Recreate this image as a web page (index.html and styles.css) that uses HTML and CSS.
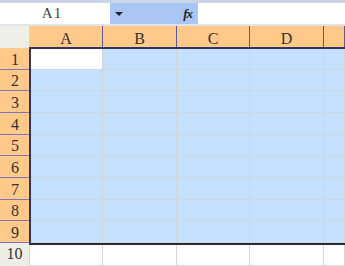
FILE: index.html
```html
<!DOCTYPE html>
<html lang="en">
<head>
  <meta charset="UTF-8">
  <meta name="viewport" content="width=device-width, initial-scale=1.0">
  <title>Sheet</title>
  <link rel="stylesheet" href="styles.css">
</head>
<body>
  <!-- Name box and formula bar -->
  <div class="formula-bar">
    <div class="name-box">A1</div>
    <div class="name-tools">
      <span class="drop"></span>
      <span class="fx">fx</span>
    </div>
    <div class="formula-input"></div>
  </div>

  <!-- Grid -->
  <div class="sheet" id="sheet">
    <div class="selection"></div>
  </div>

  <script>
    const cols = ['A', 'B', 'C', 'D', ''];
    const sheet = document.getElementById('sheet');

    function addCell(cls, text) {
      const cell = document.createElement('div');
      cell.className = cls;
      cell.textContent = text || '';
      sheet.appendChild(cell);
    }

    addCell('corner');
    cols.forEach(c => addCell('col-head', c));

    for (let r = 1; r <= 10; r++) {
      const inSel = r <= 9;
      addCell(inSel ? 'row-head' : 'row-head plain', r);
      for (let c = 0; c < cols.length; c++) {
        let cls = 'cell';
        if (inSel) cls += (r === 1 && c === 0) ? ' active' : ' selected';
        addCell(cls);
      }
    }
  </script>
</body>
</html>
```

FILE: styles.css
```css
html, body {
  margin: 0;
  height: 100%;
  overflow: hidden;
  background-color: #fff;
}

body {
  font-family: "Liberation Serif", serif;
  color: #333;
}

.formula-bar {
  display: flex;
  height: 21px;
  border-top: 3px solid #c9d5e8;
  border-bottom: 2px solid #e2e6ec;
}

.name-box {
  width: 104px;
  padding-right: 6px;
  background-color: #fff;
  font-family: "Liberation Serif", serif;
  font-size: 15px;
  letter-spacing: 1px;
  display: flex;
  align-items: center;
  justify-content: center;
  color: #444;
}

.name-tools {
  width: 77px;
  background-color: #aac6f4;
  display: flex;
  align-items: center;
  justify-content: space-between;
  padding: 0 6px 0 5px;
}

.drop {
  width: 0;
  height: 0;
  border-left: 4px solid transparent;
  border-right: 4px solid transparent;
  border-top: 4px solid #222;
  margin-top: 1px;
}

.fx {
  font-style: italic;
  font-size: 13px;
  font-weight: bold;
  letter-spacing: -1px;
  color: #222;
}

.formula-input {
  flex: 1;
  background-color: #fff;
}

.sheet {
  position: relative;
  display: grid;
  grid-template-columns: 30px 73px 74px 73px 74px 1fr;
  grid-template-rows: 22px repeat(9, 21.667px) 1fr;
  height: 240px;
}

.corner {
  background-color: #efeee5;
  border-right: 1px solid #d8d4c4;
}

.col-head {
  background-color: #ffc98a;
  border-right: 1px solid #5e5890;
  font-size: 16px;
  display: flex;
  align-items: center;
  justify-content: center;
  padding-top: 3px;
  box-sizing: border-box;
}

.row-head {
  background-color: #ffc98a;
  border-bottom: 1px solid #8074bd;
  font-size: 16px;
  display: flex;
  align-items: center;
  justify-content: center;
  padding-top: 3px;
  box-sizing: border-box;
}

.row-head.plain {
  background-color: #efeee5;
  border-bottom: none;
  border-right: 1px solid #d8d4c4;
  padding-top: 0;
}

.cell {
  border-right: 1px solid #d6d6d6;
  border-bottom: 1px solid #d6d6d6;
  box-sizing: border-box;
}

.cell.selected {
  background-color: #c5e0fc;
  border-color: #cfd6de;
}

.cell.active {
  background-color: #fff;
  border-color: #cfd6de;
}

.selection {
  position: absolute;
  top: 21px;
  left: 29px;
  right: 0;
  height: 198px;
  border: 2px solid #35345e;
  border-right: none;
  border-bottom: 2px solid #2a2a2a;
  box-sizing: border-box;
  pointer-events: none;
  z-index: 1;
}
```
